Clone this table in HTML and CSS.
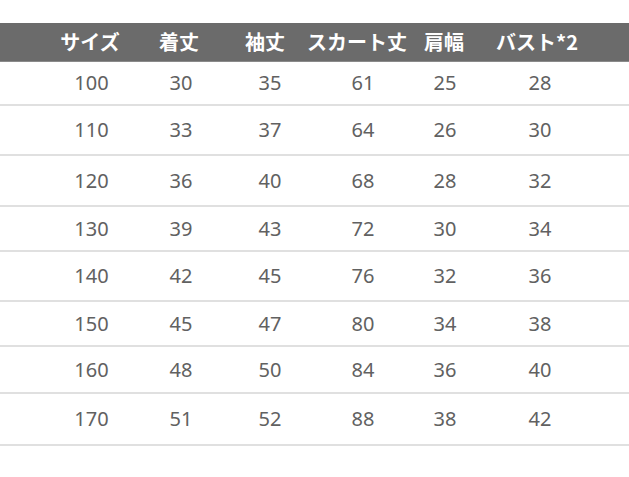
FILE: index.html
```html
<!DOCTYPE html>
<html lang="ja">
<head>
<meta charset="utf-8">
<title>サイズ表</title>
<link rel="stylesheet" href="styles.css">
</head>
<body>
<div class="chart">
  <div class="head">
    <span>サイズ</span><span>着丈</span><span>袖丈</span><span>スカート丈</span><span>肩幅</span><span>バスト*2</span>
  </div>
  <div class="row"><span>100</span><span>30</span><span>35</span><span>61</span><span>25</span><span>28</span></div>
  <div class="row"><span>110</span><span>33</span><span>37</span><span>64</span><span>26</span><span>30</span></div>
  <div class="row"><span>120</span><span>36</span><span>40</span><span>68</span><span>28</span><span>32</span></div>
  <div class="row"><span>130</span><span>39</span><span>43</span><span>72</span><span>30</span><span>34</span></div>
  <div class="row"><span>140</span><span>42</span><span>45</span><span>76</span><span>32</span><span>36</span></div>
  <div class="row"><span>150</span><span>45</span><span>47</span><span>80</span><span>34</span><span>38</span></div>
  <div class="row"><span>160</span><span>48</span><span>50</span><span>84</span><span>36</span><span>40</span></div>
  <div class="row"><span>170</span><span>51</span><span>52</span><span>88</span><span>38</span><span>42</span></div>
</div>
</body>
</html>
```

FILE: styles.css
```css
html, body {
  margin: 0;
  padding: 0;
  background: #ffffff;
}

.chart {
  padding-top: 23px;
  width: 629px;
}

.head,
.row {
  display: grid;
  align-items: center;
  justify-items: center;
  box-sizing: border-box;
  white-space: nowrap;
}

.head {
  grid-template-columns: 92px 86px 86px 98px 76px 110px;
  height: 39px;
  padding-left: 44px;
  background: #6b6b6b;
  border-bottom: 1px solid #8a8a8a;
  color: #ffffff;
  font-family: "Noto Sans CJK JP", "Noto Sans", sans-serif;
  font-weight: 700;
  font-size: 20px;
  line-height: 1;
}

.row {
  grid-template-columns: 91px 88px 90px 96px 68px 122px;
  padding-left: 46px;
  border-bottom: 2px solid #e0e0e0;
  color: #616161;
  font-family: "Noto Sans", sans-serif;
  font-size: 20px;
  line-height: 1;
}

.row:nth-child(2) { height: 44px; }
.row:nth-child(3) { height: 50px; }
.row:nth-child(4) { height: 51px; }
.row:nth-child(5) { height: 45px; }
.row:nth-child(6) { height: 50px; }
.row:nth-child(7) { height: 45px; }
.row:nth-child(8) { height: 47px; }
.row:nth-child(9) { height: 52px; }
```
